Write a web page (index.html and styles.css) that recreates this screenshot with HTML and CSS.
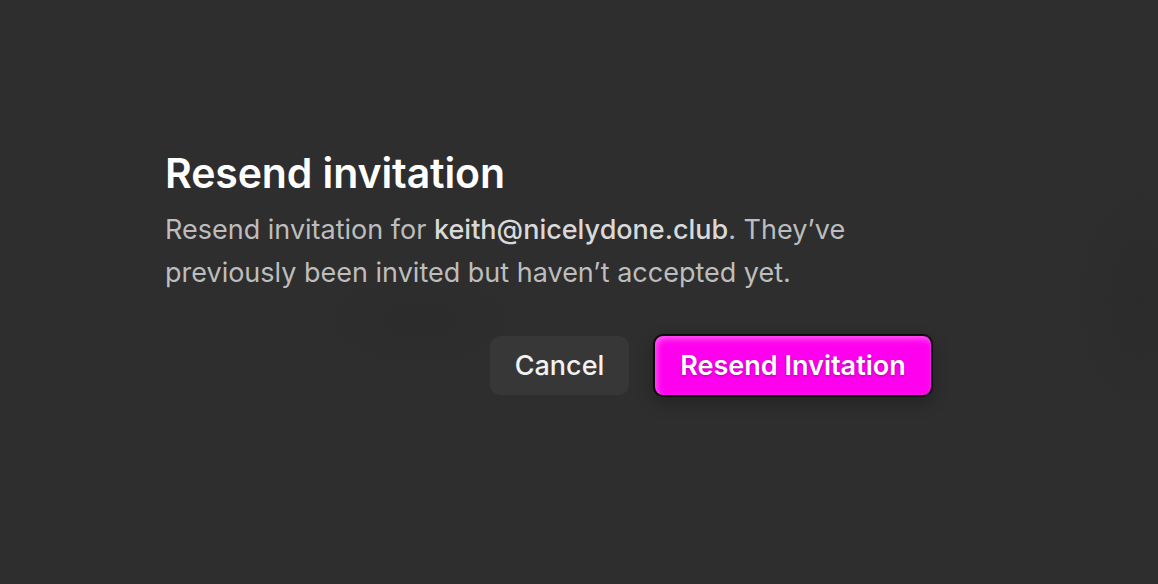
FILE: index.html
```html
<!DOCTYPE html>
<html>
<head>
<meta charset="utf-8">
<link rel="stylesheet" href="styles.css">
</head>
<body>
<div class="page">
  <div class="dialog">
    <h1 class="title">Resend invitation</h1>
    <p class="desc">Resend invitation for <strong>keith@nicelydone.club</strong>. They’ve previously been invited but haven’t accepted yet.</p>
    <div class="actions">
      <button class="btn btn-cancel">Cancel</button>
      <button class="btn btn-primary">Resend Invitation</button>
    </div>
  </div>
</div>
</body>
</html>
```
FILE: styles.css
```css
html, body {
  margin: 0;
  padding: 0;
}
body {
  background: #2e2e2e;
  font-family: Inter, "Noto Sans", sans-serif;
  width: 1158px;
  height: 584px;
  overflow: hidden;
}
.page {
  height: 584px;
  background:
    radial-gradient(ellipse 120px 60px at 420px 320px, rgba(0,0,0,0.05), transparent),
    radial-gradient(ellipse 80px 140px at 1140px 300px, rgba(0,0,0,0.06), transparent),
    #2e2e2e;
  padding: 148px 0 0 165px;
  box-sizing: border-box;
}
.dialog {
  width: 768px;
}
.title {
  margin: 0;
  font-size: 41px;
  font-weight: 600;
  color: #ffffff;
  line-height: 50px;
  letter-spacing: -0.1px;
}
.desc {
  margin: 10px 0 0;
  font-size: 27px;
  line-height: 43px;
  color: #bdbdbd;
  width: 700px;
}
.desc strong {
  font-weight: 500;
  color: #d9d9d9;
}
.actions {
  display: flex;
  justify-content: flex-end;
  align-items: center;
  gap: 24px;
  margin-top: 40px;
}
.btn {
  font-family: Inter, "Noto Sans", sans-serif;
  font-size: 27px;
  font-weight: 600;
  border: none;
  border-radius: 10px;
  cursor: pointer;
}
.btn-cancel {
  background: #373737;
  color: #f2f2f2;
  width: 139px;
  height: 59px;
  font-weight: 500;
}
.btn-primary {
  width: 280px;
  height: 63px;
  background: #ff00ee;
  color: #ffffff;
  border: 2px solid #0a0a0a;
  box-shadow: inset 2px 3px 6px rgba(255,255,255,0.35), 0 6px 16px rgba(0,0,0,0.25);
  text-shadow: 0 1px 3px rgba(0,0,0,0.3);
}
```
